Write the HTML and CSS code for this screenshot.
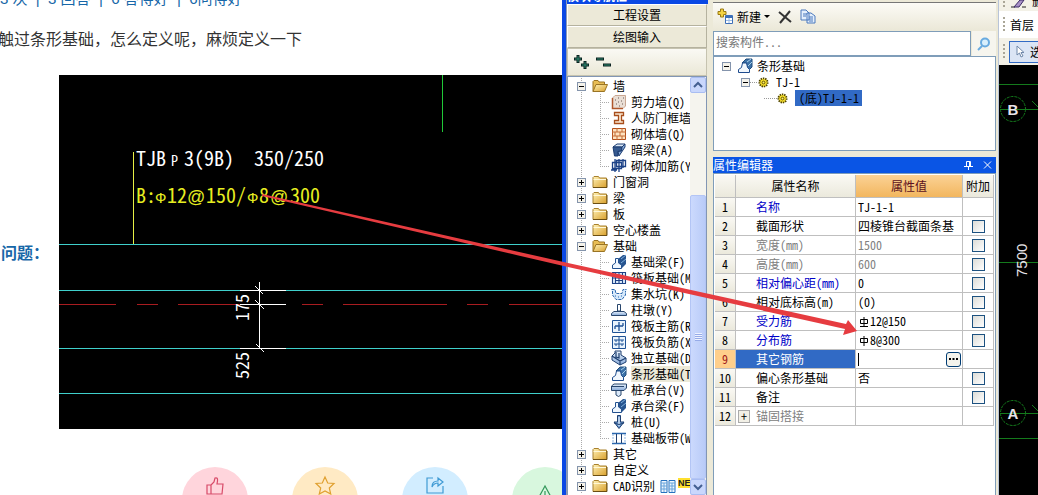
FILE: index.html
```html
<!DOCTYPE html>
<html lang="zh-CN">
<head>
<meta charset="utf-8">
<title>条形基础定义</title>
<link rel="stylesheet" href="styles.css">
</head>
<body>
<svg class="sprite" aria-hidden="true">
  <defs>
    <linearGradient id="gold" x1="0" y1="0" x2="1" y2="1"><stop offset="0" stop-color="#fff2b8"/><stop offset="1" stop-color="#d9a02c"/></linearGradient>
    <linearGradient id="sky" x1="0" y1="0" x2="0" y2="1"><stop offset="0" stop-color="#e8f2fc"/><stop offset="1" stop-color="#86a9d8"/></linearGradient>
  </defs>
  <symbol id="folder" viewBox="0 0 16 16"><path d="M1 13.500V3.500L2 2.500H6.500L7.500 4H14.500V13.500Z" fill="url(#gold)" stroke="#a8802c"/><path d="M1.500 5.500H14" stroke="#fff8d8"/><path d="M1 13.500H15V5" fill="none" stroke="#6b4e12"/></symbol>
  <symbol id="folder-open" viewBox="0 0 16 16"><path d="M1 13.500V3.500L2 2.500H6L7 4H12.500V7" fill="#e8bd55" stroke="#9a7424"/><path d="M1 13.500L4 6.500H15.500L12.500 13.500Z" fill="url(#gold)" stroke="#9a7424"/></symbol>
  <symbol id="shear" viewBox="0 0 16 16"><path d="M1.500 4L4 1.500H14.500V12L12 14.500H1.500Z" fill="#eadfd6" stroke="#c9a793"/><path d="M1.500 4V14.500H12" fill="none" stroke="#b0572c" stroke-width="1.500"/><path d="M4 6h1M7 4h1M10 7h1M5 10h1M8 12h1M11 10h1M12 4h1M7 8h1" stroke="#6a5a54"/></symbol>
  <symbol id="frame" viewBox="0 0 16 16"><path d="M3.500 2.500H12.500V5.500H10.500V10.500H12.500V13.500H3.500V10.500H7.500V5.500H3.500Z" fill="#fbe9d2" stroke="#a84e1c" stroke-width="1.300"/></symbol>
  <symbol id="brick" viewBox="0 0 16 16"><path d="M1.500 2.500H14.500V13.500H1.500Z" fill="#fde2c0" stroke="#b4501c"/><path d="M1 6H15M1 10H15M6 2V6M11 2V6M4 6V10M9 6V10M6 10V14M11 10V14" stroke="#c46a34"/></symbol>
  <symbol id="beam" viewBox="0 0 16 16"><path d="M2 5L6 2H14L11 5Z" fill="#dbe8f6" stroke="#1b3b70"/><path d="M2 5H10.500V9L7 9.500V14H3.500Z" fill="#35598f" stroke="#1b3b70"/><path d="M11 5L14 2V5L8 14L7 9.500L10.500 9Z" fill="#86a9d8" stroke="#1b3b70"/></symbol>
  <symbol id="rebar" viewBox="0 0 16 16"><path d="M1.500 4.500H10.500V10.500H1.500ZM5.500 2.500H14.500V8.500H5.500ZM4 1V14M8 1V14M12 1V10M0 12H6" fill="none" stroke="#1d4287" stroke-width="1.300"/></symbol>
  <symbol id="footbeam" viewBox="0 0 16 16"><path d="M7 5L12 1H15V10L11 14H8Z" fill="#27548f"/><path d="M1.500 14.500V11L4.500 9V4.500H7.500V9L10.500 11V14.500Z" fill="#eef6fe" stroke="#22508f"/><path d="M10 5L15 1M10 9L15 5" stroke="#7fb0dd"/></symbol>
  <symbol id="raft" viewBox="0 0 16 16"><path d="M1.500 2.500H14.500V13.500H1.500ZM4.500 5.500H11.500V10.500H4.500ZM1 8H15M8 2V14M4.500 2V14M11.500 2V14" fill="#dcecfb" fill-rule="evenodd" stroke="#1d4287" stroke-width="1.100"/></symbol>
  <symbol id="sump" viewBox="0 0 16 16"><path d="M.5 3.500H4L5 8.500H11L12 3.500H15.500L14.500 9L11 13.500H5L1.500 9Z" fill="#d4e8fb"/><path d="M.5 3.500H4L5 7.500H11L12 3.500H15.500M1.500 5V9L5 13.500H11L14.500 9V5" fill="none" stroke="#2a67ae" stroke-dasharray="3 1"/><path d="M4 10h1M7 11h1M10 10h1" stroke="#2a67ae"/></symbol>
  <symbol id="pier" viewBox="0 0 16 16"><path d="M6.500 2.500H9.500V9H6.500Z" fill="#fff" stroke="#28466d"/><path d="M3 9.500H13L15.500 11.500V13.500H.5V11.500Z" fill="url(#sky)" stroke="#28466d"/></symbol>
  <symbol id="mainbar" viewBox="0 0 16 16"><path d="M1.500 2.500H14.500V14.500H1.500Z" fill="#eaf4fd" stroke="#1f5296"/><path d="M8 4V13M4 8H12M4 11V8M12 8V5" fill="none" stroke="#1f5296" stroke-width="1.300"/></symbol>
  <symbol id="negbar" viewBox="0 0 16 16"><path d="M1.500 2.500H14.500V14.500H1.500Z" fill="#eaf4fd" stroke="#1f5296"/><path d="M8 3V14M3 6H13M3 10H13M5 6V8M11 6V8M5 10V12M11 10V12" fill="none" stroke="#1f5296"/></symbol>
  <symbol id="isolated" viewBox="0 0 16 16"><path d="M1 6L4 3V1H10V5L15 8V12L9 15L1 10Z" fill="url(#sky)" stroke="#1e3f70"/><path d="M1 6L9 11L15 8M9 11V15M5 2V7L8 8V3" fill="none" stroke="#1e3f70" stroke-width="1.200"/></symbol>
  <symbol id="strip" viewBox="0 0 16 16"><path d="M5 5L9 1H15V9L11 13L9 5Z" fill="#3d72a8" stroke="#234e7c"/><path d="M1.500 14.500V11.500L4.500 9.500L5.500 5H9.500L10.500 9.500L12.500 11.500V14.500Z" fill="#f1f7fd" stroke="#1d4b8d"/><path d="M10 4L14 1M11 8L15 4" stroke="#a8d0ea"/></symbol>
  <symbol id="cap" viewBox="0 0 16 16"><path d="M.5 4L3 2H15.500V6L13 8.500H.5Z" fill="url(#sky)" stroke="#28466d"/><path d="M5 8.500H10V13L7.500 14.500L5 13Z" fill="#dceafa" stroke="#28466d"/><path d="M1 4.500H13" stroke="#28466d"/></symbol>
  <symbol id="pile" viewBox="0 0 16 16"><path d="M6.500 1.500H9.500V8H13L8 14.500L3 8H6.500Z" fill="#6f9cd2" stroke="#1e3f70"/><path d="M8 3V12" stroke="#fff"/><path d="M3 9Q8 12 13 9" fill="none" stroke="#1e3f70"/></symbol>
  <symbol id="band" viewBox="0 0 16 16"><path d="M1 3.500H15M1 13.500H15" stroke="#2a67ae" stroke-width="1.500"/><path d="M5.500 4V13M10.500 4V13" stroke="#1e3f70"/><path d="M2 4V13M14 4V13" stroke="#8fb6e2" stroke-dasharray="2 1"/></symbol>
  <symbol id="cad" viewBox="0 0 16 16"><path d="M1 2.500H7V14.500H1ZM9 2.500H15V14.500H9Z" fill="#eef6fe" stroke="#2672bf"/><path d="M1 5H7M1 8H7M1 11H7M9 5H15M9 8H15M9 11H15M4 5V14M12 5V14" stroke="#69a5dc"/></symbol>
  <symbol id="gear" viewBox="0 0 12 12"><circle cx="6" cy="6" r="4.500" fill="#f4dc2c" stroke="#4d4200" stroke-width="2" stroke-dasharray="1.500 1"/><circle cx="6" cy="6" r="1.500" fill="#fff26b" stroke="#5a4c00"/></symbol>
</svg>

<main class="desktop">
  <article class="post">
    <p class="stats">3 次 &nbsp;|&nbsp; 3 回答 &nbsp;|&nbsp; 6 答得好 &nbsp;|&nbsp; 6问得好</p>
    <p class="question">触过条形基础，怎么定义呢，麻烦定义一下</p>
    <div class="figure">
      <strong class="figure-label">问题：</strong>
      <svg class="drawing" role="img" aria-label="条形基础标注">
        <g transform="translate(-59 -75)" fill="none" shape-rendering="crispEdges">
          <path d="M59 244.500H1900M59 290.500H1900M59 348.500H1900M59 393.500H1900" stroke="#3fd0cb"/>
          <path d="M59 304.500H116M137 304.500H158M178 304.500H240M302 304.500H323M343 304.500H447M467 304.500H488M509 304.500H1900" stroke="#a81c20"/>
          <path d="M442.500 75V132" stroke="#20c838"/>
          <path d="M133.500 152V244" stroke="#e6ee45"/>
          <path d="M259.500 282V348M240 290.500H286M240 304.500H286M240 348.500H286M255 286L263 294M255 300L264 309M256 344L264 352" stroke="#fff"/>
        </g>
        <g transform="translate(-59 -75)" class="cad-text">
          <text x="136" y="166">TJB</text><text x="171" y="166" class="sub">P</text><text x="184" y="166">3(9B)</text><text x="254" y="166">350/250</text>
          <g class="yellow"><text x="136" y="203">B:</text><text x="155" y="203" class="phi-mark">Ф</text><text x="167" y="203">12</text><text x="187" y="203" class="at">@</text><text x="206" y="203">150/</text><text x="247" y="203" class="phi-mark">Ф</text><text x="259" y="203">8</text><text x="270" y="203" class="at">@</text><text x="290" y="203">300</text></g>
          <text transform="translate(249 321) rotate(-90)" class="dim-text">175</text>
          <text transform="translate(249 379) rotate(-90)" class="dim-text">525</text>
        </g>
      </svg>
    </div>
    <div class="actions">
      <button class="act pink" aria-label="赞"><svg viewBox="0 0 20 20"><path d="M2 9H6V18H2ZM6 9L9 6L10 2Q13 1 12.500 5L12 8H18L17 18H6"/></svg></button>
      <button class="act amber" aria-label="收藏"><svg viewBox="0 0 20 20"><path d="M10 1L12.700 7L19 7.500L14.300 12L15.700 18L10 15L4.300 18L5.700 12L1 7.500L7.300 7Z"/></svg></button>
      <button class="act blue" aria-label="分享"><svg viewBox="0 0 20 20"><path d="M8 2H2V17H18V10M7 11Q7 5 13 5V2L18 6L13 10V7Q9 7 7 11Z"/></svg></button>
      <button class="act green" aria-label="举报"><svg viewBox="0 0 20 20"><path d="M10 10L4 21H16ZM10 15V19"/></svg></button>
    </div>
  </article>

  <aside class="nav">
    <div class="nav-title"><span>模块导航栏</span></div>
    <button class="nav-tab">工程设置</button>
    <button class="nav-tab">绘图输入</button>
    <div class="nav-tools">
      <button aria-label="全部展开"><svg width="18" height="16" viewBox="0 0 18 16"><path d="M5 1V9M1 5H9M12 7V15M8 11H16" stroke="#0b2320" stroke-width="3"/><path d="M5 2V8M2 5H8M12 8V14M9 11H15" stroke="#2f8a72"/></svg></button>
      <button aria-label="全部折叠"><svg width="18" height="16" viewBox="0 0 18 16"><path d="M1 5H9M8 11H16" stroke="#0b2320" stroke-width="3"/><path d="M2 5H8M9 11H15" stroke="#2f8a72"/></svg></button>
    </div>
    <div class="tree-wrap">
      <ul class="tree">
        <li><div class="node"><i class="box minus"></i><svg><use href="#folder-open"/></svg><span>墙</span></div>
          <ul>
            <li><svg><use href="#shear"/></svg><span>剪力墙(Q)</span></li>
            <li><svg><use href="#frame"/></svg><span>人防门框墙</span></li>
            <li><svg><use href="#brick"/></svg><span>砌体墙(Q)</span></li>
            <li><svg><use href="#beam"/></svg><span>暗梁(A)</span></li>
            <li><svg><use href="#rebar"/></svg><span>砌体加筋(Y</span></li>
          </ul></li>
        <li><div class="node"><i class="box"></i><svg><use href="#folder"/></svg><span>门窗洞</span></div></li>
        <li><div class="node"><i class="box"></i><svg><use href="#folder"/></svg><span>梁</span></div></li>
        <li><div class="node"><i class="box"></i><svg><use href="#folder"/></svg><span>板</span></div></li>
        <li><div class="node"><i class="box"></i><svg><use href="#folder"/></svg><span>空心楼盖</span></div></li>
        <li><div class="node"><i class="box minus"></i><svg><use href="#folder-open"/></svg><span>基础</span></div>
          <ul>
            <li><svg><use href="#footbeam"/></svg><span>基础梁(F)</span></li>
            <li><svg><use href="#raft"/></svg><span>筏板基础(M</span></li>
            <li><svg><use href="#sump"/></svg><span>集水坑(K)</span></li>
            <li><svg><use href="#pier"/></svg><span>柱墩(Y)</span></li>
            <li><svg><use href="#mainbar"/></svg><span>筏板主筋(R</span></li>
            <li><svg><use href="#negbar"/></svg><span>筏板负筋(X</span></li>
            <li><svg><use href="#isolated"/></svg><span>独立基础(D</span></li>
            <li><svg><use href="#strip"/></svg><span class="current">条形基础(T</span></li>
            <li><svg><use href="#cap"/></svg><span>桩承台(V)</span></li>
            <li><svg><use href="#footbeam"/></svg><span>承台梁(F)</span></li>
            <li><svg><use href="#pile"/></svg><span>桩(U)</span></li>
            <li><svg><use href="#band"/></svg><span>基础板带(W</span></li>
          </ul></li>
        <li><div class="node"><i class="box"></i><svg><use href="#folder"/></svg><span>其它</span></div></li>
        <li><div class="node"><i class="box"></i><svg><use href="#folder"/></svg><span>自定义</span></div></li>
        <li><div class="node"><i class="box"></i><svg><use href="#folder"/></svg><span>CAD识别</span><svg><use href="#cad"/></svg><b class="new">NE</b></div></li>
      </ul>
      <div class="scroll">
        <button aria-label="向上"><svg width="10" height="8" viewBox="0 0 10 8"><path d="M1 6L5 2L9 6"/></svg></button>
        <div class="thumb"><i></i></div>
        <button aria-label="向下"><svg width="10" height="8" viewBox="0 0 10 8"><path d="M1 2L5 6L9 2"/></svg></button>
      </div>
    </div>
  </aside>

  <section class="props">
    <div class="list-title"><span>构件列表</span></div>
    <div class="list-tools">
      <button class="create"><svg width="17" height="17" viewBox="0 0 17 17"><path d="M3.500 1H6.500V3.500H9V6.500H6.500V9H3.500V6.500H1V3.500H3.500Z" fill="#f5d341" stroke="#9a7a14"/><path d="M8.500 7.500H15.500V15.500H8.500Z" fill="#fff" stroke="#3d6fb8"/><path d="M8 9H16" stroke="#3d6fb8" stroke-width="2"/><path d="M9 12.500H15M12 10V15" stroke="#9dbde6"/></svg>新建<i class="caret"></i></button>
      <button aria-label="删除"><svg width="14" height="14" viewBox="0 0 14 14"><path d="M1 2L13 12M12 1L2 13" stroke="#333" stroke-width="2"/></svg></button>
      <button aria-label="复制"><svg width="16" height="15" viewBox="0 0 16 15"><path d="M1 1H6L9 4V11H1ZM7 4H11L15 7V14H7Z" fill="#e4effc" stroke="#4a78bd"/><path d="M3 5H7M3 7H6M9 8H13M9 10H13M9 12H13" stroke="#4a78bd"/></svg></button>
    </div>
    <div class="search">
      <input type="text" placeholder="搜索构件..." aria-label="搜索构件">
      <button aria-label="搜索"><svg width="14" height="14" viewBox="0 0 14 14"><circle cx="8" cy="5.500" r="4" fill="#d8effc" stroke="#69abe0" stroke-width="2"/><path d="M5 9L1 13" stroke="#69abe0" stroke-width="2"/></svg></button>
    </div>
    <ul class="parts">
      <li class="lv1"><i class="box minus"></i><svg class="big"><use href="#strip"/></svg><span>条形基础</span></li>
      <li class="lv2"><i class="box minus"></i><i class="dots"></i><svg class="small"><use href="#gear"/></svg><span>TJ-1</span></li>
      <li class="lv3"><i class="dots"></i><svg class="small"><use href="#gear"/></svg><span class="picked">(底)TJ-1-1</span></li>
    </ul>
    <div class="editor-title"><span>属性编辑器</span>
      <button aria-label="固定"><svg width="9" height="10" viewBox="0 0 9 10"><path d="M2.500 6V1.500H6.500V6M0 6.500H9M4.500 6V10M5.500 2V6"/></svg></button>
      <button aria-label="关闭"><svg width="9" height="10" viewBox="0 0 9 10"><path d="M1 1.500L8 8.500M8 1.500L1 8.500"/></svg></button>
    </div>
    <div class="sheet">
      <table>
        <colgroup><col class="c-no"><col><col class="c-val"><col class="c-add"></colgroup>
        <thead><tr><th></th><th>属性名称</th><th class="hot">属性值</th><th>附加</th></tr></thead>
        <tbody>
          <tr><th>1</th><td class="link">名称</td><td>TJ-1-1</td><td></td></tr>
          <tr><th>2</th><td>截面形状</td><td>四棱锥台截面条基</td><td><input type="checkbox" aria-label="附加 截面形状"></td></tr>
          <tr class="dim"><th>3</th><td>宽度(mm)</td><td>1500</td><td><input type="checkbox" aria-label="附加 宽度"></td></tr>
          <tr class="dim"><th>4</th><td>高度(mm)</td><td>600</td><td><input type="checkbox" aria-label="附加 高度"></td></tr>
          <tr><th>5</th><td class="link">相对偏心距(mm)</td><td>0</td><td><input type="checkbox" aria-label="附加 相对偏心距"></td></tr>
          <tr><th>6</th><td>相对底标高(m)</td><td>(0)</td><td><input type="checkbox" aria-label="附加 相对底标高"></td></tr>
          <tr><th>7</th><td class="link">受力筋</td><td><svg class="phi" viewBox="0 0 12 12"><path d="M2.500 3.500H9.500V7.500H2.500ZM6 1V10.500M2 10.500H10"/></svg>12@150</td><td><input type="checkbox" aria-label="附加 受力筋"></td></tr>
          <tr><th>8</th><td class="link">分布筋</td><td><svg class="phi" viewBox="0 0 12 12"><path d="M2.500 3.500H9.500V7.500H2.500ZM6 1V11"/></svg>8@300</td><td><input type="checkbox" aria-label="附加 分布筋"></td></tr>
          <tr class="active"><th>9</th><td>其它钢筋</td><td><div class="edit"><i class="cursor"></i><input type="text" aria-label="其它钢筋"><button aria-label="更多"><svg width="9" height="3" viewBox="0 0 9 3"><path d="M0 1H2M3.500 1H5.500M7 1H9"/></svg></button></div></td><td></td></tr>
          <tr><th>10</th><td>偏心条形基础</td><td>否</td><td><input type="checkbox" aria-label="附加 偏心条形基础"></td></tr>
          <tr><th>11</th><td>备注</td><td></td><td><input type="checkbox" aria-label="附加 备注"></td></tr>
          <tr class="group"><th>12</th><td><div class="fold"><button aria-label="展开">+</button>锚固搭接</div></td><td></td><td></td></tr>
        </tbody>
      </table>
    </div>
  </section>

  <section class="model">
    <div class="bar short"><i class="grip"></i><svg width="17" height="9" viewBox="0 0 17 9"><path d="M1 7H5M12 7H16" stroke="#222"/><path d="M4 7L10 0H14L9 7Z" fill="#a991c8" stroke="#3c2c66"/></svg><span>删除</span></div>
    <div class="bar floor"><i class="grip"></i><span>首层</span></div>
    <div class="bar"><i class="grip"></i><button class="select"><svg width="10" height="13" viewBox="0 0 10 13"><path d="M2 1V10L4.500 8L6 12L8 11L6 7.500H9Z" fill="#fff" stroke="#6f88aa"/></svg>选择</button></div>
    <svg class="axes" role="img" aria-label="轴网">
      <g fill="none" stroke="#147a1c"><path d="M0 19.500H900M0 197.500H900M0 373.500H900M1 44.500H900M1 348.500H900M33 36L40 43M33 340L40 347"/><circle cx="14" cy="44" r="12.500" stroke-dasharray="3 1"/><circle cx="14" cy="348" r="12.500" stroke-dasharray="3 1"/></g>
      <text x="14" y="50" text-anchor="middle">B</text><text x="14" y="354" text-anchor="middle">A</text>
      <text transform="translate(28 212) rotate(-90)" class="len">7500</text>
    </svg>
  </section>

  <svg class="arrow" aria-hidden="true"><path d="M262 194L568 263L846 324L848 320L857 331L843 335L845 329L568 267L262 196Z"/></svg>
</main>
</body>
</html>
```
FILE: styles.css
```css
* { box-sizing: border-box; }
body {
  margin: 0;
  background: #fff;
  color: #000;
  font: 12px/16px "Noto Sans Mono CJK SC", "Noto Sans CJK SC", sans-serif;
}
ul { list-style: none; margin: 0; padding: 0; }
p { margin: 0; }
button { border: 0; padding: 0; background: none; font: inherit; color: inherit; }
svg { flex: none; }
.sprite { position: absolute; width: 0; height: 0; }

.desktop {
  position: relative;
  display: grid;
  grid-template-columns: minmax(0, 1fr) 146px 291px 39px;
  height: 100vh;
  overflow: hidden;
}
.desktop > * { min-width: 0; overflow: hidden; }

/* forum post */
.post { display: flex; flex-direction: column; white-space: nowrap; }
.stats {
  height: 9px;
  display: flex;
  align-items: flex-end;
  color: #1767a8;
  font: 15px/20px "Liberation Sans", "Noto Sans CJK SC", sans-serif;
}
.question {
  margin: 17px 0 25px -2px;
  color: #333;
  font: 16px/24px "Noto Sans CJK SC", sans-serif;
}
.figure { display: flex; align-items: center; height: 354px; flex: none; }
.figure-label { width: 59px; padding-left: 1px; color: #1767a8; font: bold 16px/24px "Noto Sans CJK SC", sans-serif; }
.drawing { flex: 1; height: 100%; background: #000; }
.cad-text { fill: #fff; font: 300 20px "Noto Sans Mono CJK SC", "Noto Sans CJK SC", monospace; }
.cad-text .sub { font-size: 14px; }
.cad-text .phi-mark { font: 15px "Liberation Sans", sans-serif; }
.cad-text .at { font: 18px "Liberation Sans", sans-serif; }
.cad-text .dim-text { font-size: 18px; }
.cad-text .yellow { fill: #e6ee20; }
.actions { display: flex; gap: 44px; padding: 38px 0 0 182px; }
.act { flex: none; width: 66px; height: 66px; border-radius: 50%; display: flex; justify-content: center; padding-top: 9px; }
.act svg { width: 20px; height: 20px; fill: none; stroke: currentColor; stroke-width: 1.2; overflow: visible; }
.pink { background: #ffd5dc; color: #d84a68; }
.amber { background: #ffeac4; color: #e0a030; }
.blue { background: #d2edff; color: #3f9ad4; }
.green { background: #d8f7de; color: #32975a; }

/* module tree */
.nav {
  display: flex;
  flex-direction: column;
  border-left: 4px solid #0a48e4;
  background: #ece9d8;
  box-shadow: inset 1px 0 #8e9cb4;
  padding-left: 1px;
}
.nav-title { height: 4px; background: #0a48e4; color: #fff; display: flex; align-items: flex-end; overflow: hidden; font-weight: bold; }
.nav-tab { height: 22px; flex: none; border: 1px solid #b5b29f; border-top-color: #fff; border-left-color: #fff; margin-right: 1px; background: #ece9d8; }
.nav-tools { display: flex; gap: 4px; align-items: center; height: 28px; flex: none; padding-left: 5px; background: linear-gradient(#faf9f4, #ebe8d7); border: 1px solid #c6c3b0; margin-right: 1px; }
.nav-tools button { height: 16px; }
.tree-wrap { flex: 1; min-height: 0; display: flex; overflow: hidden; margin-right: 1px; background: #fff; border: 1px solid #8296b4; border-bottom: 0; }
.tree { flex: 1; min-width: 0; overflow: hidden; padding: 1px 0 0 9px; white-space: nowrap; }
.tree > li { background: repeating-linear-gradient(#aaa 0 1px, transparent 1px 2px) 4px 0 / 1px 100% no-repeat; }
.node, .tree ul li { display: flex; align-items: center; height: 16px; }
.node > svg { width: 16px; height: 16px; margin: 0 5px; }
.node > span + svg { margin: 0 2px 0 5px; }
.tree ul { margin-left: 23px; background: repeating-linear-gradient(#aaa 0 1px, transparent 1px 2px) 0 0 / 1px calc(100% - 8px) no-repeat; }
.tree ul li { padding-left: 11px; gap: 4px; background: repeating-linear-gradient(90deg, #aaa 0 1px, transparent 1px 2px) 0 8px / 10px 1px no-repeat; }
.tree ul svg { width: 16px; height: 16px; }
.current { background: #ece9d8; }
.new { background: #ffe02e; color: #222; font: bold 9px/10px "Liberation Sans", sans-serif; align-self: flex-start; }
.box {
  flex: none;
  width: 9px;
  height: 9px;
  border: 1px solid #8494ac;
  background:
    linear-gradient(#000, #000) center / 5px 1px no-repeat,
    linear-gradient(#000, #000) center / 1px 5px no-repeat,
    #f4f2ea;
}
.box.minus { background: linear-gradient(#000, #000) center / 5px 1px no-repeat, #f4f2ea; }
.node .box { margin-right: 1px; }
.scroll { flex: none; width: 16px; display: flex; flex-direction: column; background: #f5f4ee; }
.scroll button { height: 16px; flex: none; border: 1px solid #a9bdf2; border-radius: 2px; background: #c9d7fc; display: flex; align-items: center; justify-content: center; }
.scroll path { fill: none; stroke: #435f91; stroke-width: 2; }
.thumb { flex: 1; margin-top: 102px; border: 1px solid #b3c5f5; border-radius: 2px; background: linear-gradient(90deg, #cbd9fd, #b9cbf8); display: flex; align-items: center; justify-content: center; }
.thumb i { width: 7px; height: 8px; background: repeating-linear-gradient(#eef3ff 0 1px, #96abe8 1px 2px); }

/* component list */
.props { display: flex; flex-direction: column; background: #ece9d8; padding: 0 2px 0 5px; border-right: 1px solid #b8c4d8; }
.list-title { height: 3px; border-bottom: 1px solid #777; display: flex; align-items: flex-end; overflow: hidden; }
.list-tools { height: 27px; flex: none; display: flex; align-items: center; gap: 8px; padding-left: 4px; background: linear-gradient(#fcfbf6, #ebe8d8); }
.list-tools button { display: flex; align-items: center; }
.create { gap: 3px; }
.caret { border: 3px solid transparent; border-top-color: #000; border-bottom: 0; }
.search { height: 25px; flex: none; display: flex; margin-top: 1px; }
.search input { flex: 1; min-width: 0; border: 1px solid #7f9db9; padding: 0 2px 4px; font: inherit; background: #fff; }
.search input::placeholder { color: #777; opacity: 1; }
.search button { width: 24px; margin-left: 1px; background: #f6f5ee; display: flex; align-items: center; justify-content: center; }
.parts { height: 95px; flex: none; background: #fff; border: 1px solid #7f9db9; padding: 1px 0 0 8px; }
.parts li { height: 16px; display: flex; align-items: center; }
.parts .big { width: 16px; height: 16px; margin: 0 4px 0 6px; }
.parts .small { width: 11px; height: 11px; margin-right: 7px; }
.lv2 { padding-left: 19px; }
.lv3 { padding-left: 42px; }
.dots { width: 8px; height: 1px; background: repeating-linear-gradient(90deg, #999 0 1px, transparent 1px 2px); }
.lv3 .dots { width: 13px; }
.picked { background: #316ac5; padding: 0 3px 0 4px; }

/* property editor */
.editor-title { height: 16px; flex: none; margin-top: 6px; display: flex; align-items: center; gap: 10px; padding-right: 4px; background: #0a55e5; color: #fff; }
.editor-title span { flex: 1; }
.editor-title button { height: 10px; display: flex; }
.editor-title path { fill: none; stroke: #fff; }
.sheet { flex: 1; min-height: 0; background: #fff; border: 1px solid #7f9db9; border-bottom: 0; padding: 1px 1px 0; }
table { width: 100%; border-collapse: separate; border-spacing: 0; table-layout: fixed; }
.c-no { width: 21px; }
.c-val { width: 107px; }
.c-add { width: 31px; }
th, td { height: 19px; padding: 0 0 0 2px; border-right: 1px solid #bfbfbf; border-bottom: 1px solid #bfbfbf; font-weight: normal; line-height: 16px; text-align: left; white-space: nowrap; }
th { padding: 0; text-align: center; background: linear-gradient(#faf9f4, #ebe9dc); }
thead th { height: 23px; }
thead .hot { background: linear-gradient(#fbd295, #f2b65e); color: #5c1020; }
td:nth-child(2) { padding-left: 20px; }
td:last-child { padding: 0; text-align: center; }
.link { color: #0000c8; }
.dim td { color: #808080; }
td input[type="checkbox"] { appearance: none; display: block; width: 13px; height: 13px; margin: 1px auto 0; border: 1px solid #1c5180; background: linear-gradient(135deg, #dcdcd7, #fff); }
.phi { width: 12px; height: 12px; vertical-align: -2px; fill: none; stroke: #000; }
.active th { background: #ffcf8b; color: #a01818; }
.active td:nth-child(2) { background: #316ac5; color: #fff; }
.edit { display: flex; align-items: center; height: 18px; }
.edit input { flex: 1; min-width: 0; border: 0; padding: 0; height: 14px; font: inherit; background: none; }
.edit button { width: 15px; height: 15px; margin-right: 1px; border: 1px solid #003c74; border-radius: 3px; background: #f4f3ec; display: flex; align-items: center; justify-content: center; }
.edit path { stroke: #000; stroke-width: 2; }
.cursor { width: 1px; height: 13px; background: #000; }
tr.group td:nth-child(2) { padding-left: 2px; color: #808080; }
.fold { display: flex; align-items: center; gap: 6px; }
.fold button { width: 12px; height: 13px; border: 1px solid #aaa; background: #f2f0e6; color: #000; line-height: 10px; }

/* model view */
.model { display: flex; flex-direction: column; background: #ece9d8; white-space: nowrap; }
.bar { height: 27px; flex: none; display: flex; align-items: center; gap: 4px; padding: 2px 0 2px 4px; background: #f3f1e7; }
.bar.short { height: 11px; align-items: flex-end; overflow: hidden; }
.bar.floor { background: #fff; }
.bar > span, .bar > button { flex: none; }
.grip { flex: none; width: 2px; height: 16px; background: repeating-linear-gradient(#aaa697 0 2px, transparent 2px 4px); }
.bar.floor, .bar.short { gap: 5px; }
.select { display: flex; align-items: center; gap: 5px; height: 22px; width: 60px; padding-left: 5px; border: 1px solid #316ac5; background: #dbe5f5; }
.axes { flex: 1; width: 100%; background: #000; }
.axes text { fill: #e8e4e8; font: bold 15px "Liberation Sans", sans-serif; }
.axes .len { font-weight: normal; }

.arrow { position: absolute; inset: 0; width: 100%; height: 100%; pointer-events: none; fill: #e63c40; }
```
